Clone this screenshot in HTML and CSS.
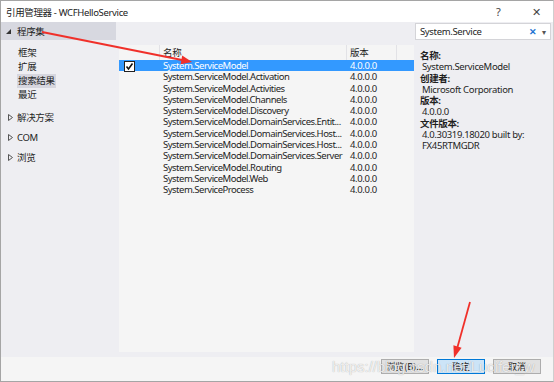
FILE: index.html
```html
<!DOCTYPE html>
<html lang="zh-CN">
<head>
  <meta charset="UTF-8" />
  <title>引用管理器 - WCFHelloService</title>
  <link rel="stylesheet" href="styles.css">
</head>
<body>

<div class="window">
  <div class="titlebar">
    <span class="title">引用管理器 - WCFHelloService</span>
    <span class="help">?</span>
    <span class="close">✕</span>
  </div>

  <div class="body">
    <aside class="sidebar">
      <div class="group open">
        <svg class="tri" width="5" height="5" viewBox="0 0 5 5"><polygon points="5,0 5,5 0,5" fill="#333"/></svg>
        <span>程序集</span>
      </div>
      <ul class="sub">
        <li><span>框架</span></li>
        <li><span>扩展</span></li>
        <li class="active"><span>搜索结果</span></li>
        <li><span>最近</span></li>
      </ul>
      <div class="group">
        <svg class="tri" width="5" height="7" viewBox="0 0 5 7"><polygon points="0.5,0.5 4.5,3.5 0.5,6.5" fill="none" stroke="#555" stroke-width="1"/></svg>
        <span>解决方案</span>
      </div>
      <div class="group">
        <svg class="tri" width="5" height="7" viewBox="0 0 5 7"><polygon points="0.5,0.5 4.5,3.5 0.5,6.5" fill="none" stroke="#555" stroke-width="1"/></svg>
        <span>COM</span>
      </div>
      <div class="group">
        <svg class="tri" width="5" height="7" viewBox="0 0 5 7"><polygon points="0.5,0.5 4.5,3.5 0.5,6.5" fill="none" stroke="#555" stroke-width="1"/></svg>
        <span>浏览</span>
      </div>
    </aside>

    <main class="results">
      <div class="list">
        <div class="list-head">
          <div class="c-check"></div>
          <div class="c-name">名称</div>
          <div class="c-ver">版本</div>
          <div class="c-rest"></div>
        </div>
        <div class="row selected">
          <div class="c-check"><span class="checkbox"><svg width="9" height="9" viewBox="0 0 9 9"><path d="M1.5 4.5 L3.5 7 L7.5 1.5" fill="none" stroke="#111" stroke-width="1.6"/></svg></span></div>
          <div class="c-name">System.ServiceModel</div>
          <div class="c-ver">4.0.0.0</div>
        </div>
        <div class="row"><div class="c-check"></div><div class="c-name">System.ServiceModel.Activation</div><div class="c-ver">4.0.0.0</div></div>
        <div class="row"><div class="c-check"></div><div class="c-name">System.ServiceModel.Activities</div><div class="c-ver">4.0.0.0</div></div>
        <div class="row"><div class="c-check"></div><div class="c-name">System.ServiceModel.Channels</div><div class="c-ver">4.0.0.0</div></div>
        <div class="row"><div class="c-check"></div><div class="c-name">System.ServiceModel.Discovery</div><div class="c-ver">4.0.0.0</div></div>
        <div class="row"><div class="c-check"></div><div class="c-name">System.ServiceModel.DomainServices.Entit...</div><div class="c-ver">4.0.0.0</div></div>
        <div class="row"><div class="c-check"></div><div class="c-name">System.ServiceModel.DomainServices.Host...</div><div class="c-ver">4.0.0.0</div></div>
        <div class="row"><div class="c-check"></div><div class="c-name">System.ServiceModel.DomainServices.Host...</div><div class="c-ver">4.0.0.0</div></div>
        <div class="row"><div class="c-check"></div><div class="c-name">System.ServiceModel.DomainServices.Server</div><div class="c-ver">4.0.0.0</div></div>
        <div class="row"><div class="c-check"></div><div class="c-name">System.ServiceModel.Routing</div><div class="c-ver">4.0.0.0</div></div>
        <div class="row"><div class="c-check"></div><div class="c-name">System.ServiceModel.Web</div><div class="c-ver">4.0.0.0</div></div>
        <div class="row"><div class="c-check"></div><div class="c-name">System.ServiceProcess</div><div class="c-ver">4.0.0.0</div></div>
      </div>
    </main>

    <aside class="details">
      <div class="search">
        <span class="search-text">System.Service</span>
        <span class="search-clear">✕</span>
        <span class="search-drop">▾</span>
      </div>
      <dl>
        <dt>名称:</dt>
        <dd>System.ServiceModel</dd>
        <dt>创建者:</dt>
        <dd>Microsoft Corporation</dd>
        <dt>版本:</dt>
        <dd>4.0.0.0</dd>
        <dt>文件版本:</dt>
        <dd>4.0.30319.18020 built by:<br>FX45RTMGDR</dd>
      </dl>
    </aside>
  </div>

  <div class="footer">
    <button>浏览(B)...</button>
    <button class="primary">确定</button>
    <button>取消</button>
  </div>

  <div class="watermark">https://blog.csdn.net/Lucifer_w</div>

  <svg class="arrows" width="554" height="382" viewBox="0 0 554 382">
    <line x1="42" y1="32" x2="182" y2="60" stroke="#f0302a" stroke-width="1.8"/>
    <polygon points="192,62 182.2,55.5 180.6,64.2" fill="#f0302a"/>
    <line x1="470" y1="302" x2="457.5" y2="347" stroke="#f0302a" stroke-width="1.8"/>
    <polygon points="454,358 461.6,347.8 453.4,345.2" fill="#f0302a"/>
  </svg>
</div>

</body>
</html>
```

FILE: styles.css
```css
body {
  margin: 0;
  font-family: "Noto Sans", "Noto Sans CJK SC", sans-serif;
  font-size: 9.5px;
  letter-spacing: -0.35px;
  color: #1e1e1e;
}
.window {
  position: relative;
  width: 554px;
  height: 382px;
  box-sizing: border-box;
  border: 1px solid #a5a5a5;
  border-right-color: #cfcfcf;
  display: flex;
  flex-direction: column;
  background: #f5f5f5;
  overflow: hidden;
}

/* title bar */
.titlebar {
  height: 21px;
  flex: none;
  background: #fff;
  display: flex;
  align-items: center;
  padding-left: 5px;
}
.title { flex: 1; font-size: 9.5px; color: #222; }
.help { width: 12px; margin-right: 24px; color: #444; font-size: 11px; }
.close { width: 12px; margin-right: 9px; color: #444; font-size: 11px; }

/* main area */
.body {
  height: 335px;
  flex: none;
  display: flex;
  background: #eeeef2;
}
.sidebar { width: 118px; flex: none; }
.group {
  height: 20px;
  display: flex;
  align-items: center;
  padding-left: 7px;
  gap: 4px;
}
.group.open {
  height: 18px;
  margin-right: 3px;
  padding-left: 5px;
  gap: 6px;
  background: #d7d8e0;
}
.tri { display: block; }
.sub {
  list-style: none;
  margin: 6px 0 5px;
  padding: 0 0 0 16px;
}
.sub li { height: 14px; line-height: 14px; }
.sub li span { padding: 0 1px; display: inline-block; }
.sub li.active span { background: #d6d6de; }

.results {
  width: 295px;
  flex: none;
  padding: 23px 0 5px;
  box-sizing: border-box;
}
.list { height: 100%; background: #f5f5f5; }
.list-head {
  display: flex;
  height: 15px;
  line-height: 15px;
}
.list-head > div { border-right: 1px solid #e2e2e6; box-sizing: border-box; }
.list-head .c-rest { border-right: none; }
.c-check { width: 41px; flex: none; padding-left: 5px; box-sizing: border-box; }
.c-name {
  width: 187px;
  flex: none;
  padding-left: 3px;
  box-sizing: border-box;
  white-space: nowrap;
  overflow: hidden;
  text-overflow: ellipsis;
}
.row .c-name { letter-spacing: -0.5px; }
.c-ver { width: 50px; flex: none; padding-left: 3px; box-sizing: border-box; }
.c-rest { flex: 1; }
.row {
  display: flex;
  height: 11.3px;
  line-height: 11.3px;
}
.row.selected { background: #3399ff; color: #fff; }
.checkbox {
  display: inline-flex;
  width: 9px;
  height: 9px;
  margin-top: 1px;
  border: 1px solid #222;
  background: #fff;
  vertical-align: top;
}

/* details */
.details { flex: 1; padding-left: 1px; }
.search {
  margin-top: 1px;
  width: 136px;
  height: 17px;
  box-sizing: border-box;
  border: 1px solid #d4d4d8;
  background: #fff;
  display: flex;
  align-items: center;
  padding-left: 4px;
}
.search-text { flex: 1; }
.search-clear { color: #1e73d2; font-size: 9px; font-weight: bold; margin-right: 6px; }
.search-drop { color: #555; font-size: 8px; margin-right: 4px; }
dl { margin: 10px 0 0 5px; line-height: 11.3px; }
dt { font-weight: bold; }
dd { margin: 0 0 0 2px; }

/* footer */
.footer {
  flex: 1;
  display: flex;
  justify-content: flex-end;
  align-items: flex-start;
  gap: 8px;
  padding: 2px 12px 0 0;
}
button {
  width: 48px;
  height: 15px;
  padding: 0;
  font-family: "Noto Sans CJK SC", sans-serif;
  font-size: 9px;
  line-height: 13px;
  color: #1e1e1e;
  border: 1px solid #adadad;
  background: #e1e1e1;
}
button.primary { border-color: #0078d7; background: #cce4f7; }

.watermark {
  position: absolute;
  left: 331px;
  top: 357px;
  font-family: "Liberation Sans", sans-serif;
  font-size: 15px;
  letter-spacing: 0;
  color: rgba(255, 255, 255, 0.8);
  text-shadow: 0 0 1px rgba(0, 0, 0, 0.35);
  white-space: nowrap;
}
.arrows {
  position: absolute;
  left: -1px;
  top: -1px;
  pointer-events: none;
}
```
